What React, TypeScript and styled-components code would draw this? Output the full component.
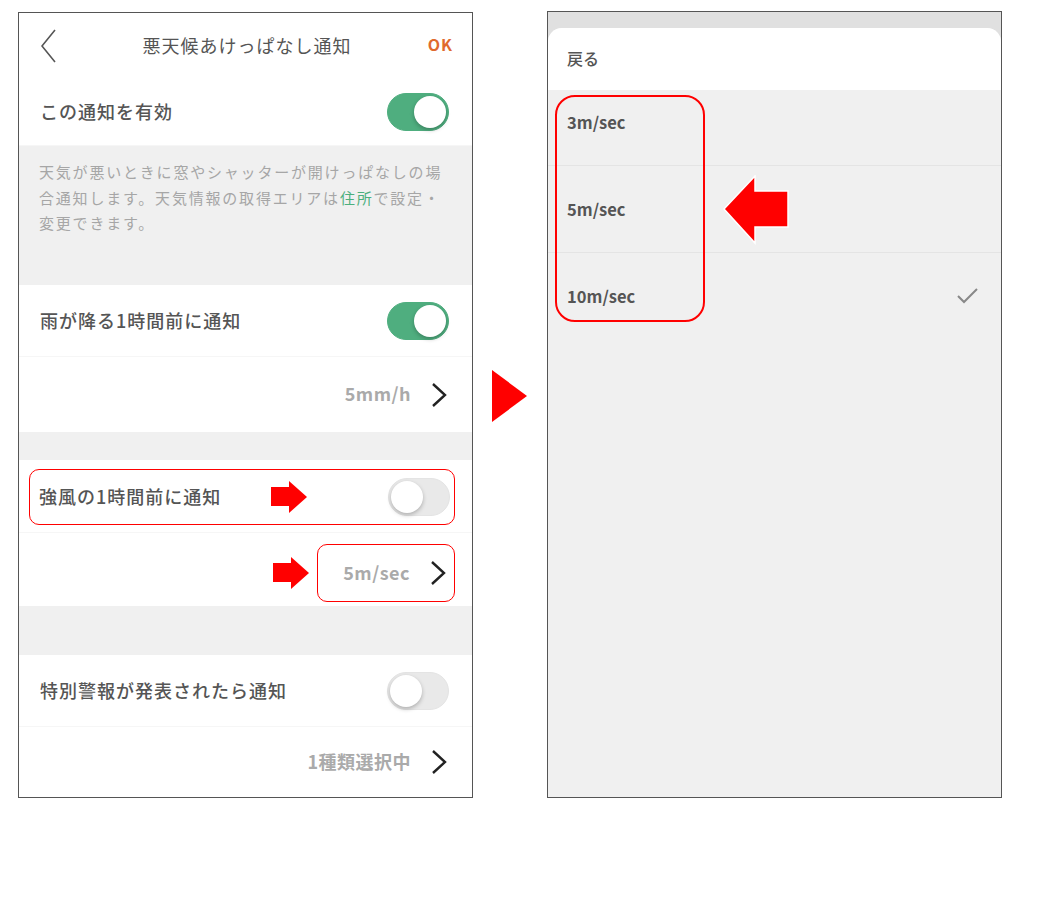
import { createGlobalStyle, styled } from "styled-components";

const GlobalStyle = createGlobalStyle`
  body {
    margin: 0;
    background: #ffffff;
    font-family: "Noto Sans CJK JP", "Noto Sans", sans-serif;
  }
`;

const Page = styled.div`
  display: flex;
  align-items: flex-start;
  padding: 12px 0 0 18px;
`;

const Panel = styled.div`
  width: 455px;
  height: 786px;
  box-sizing: border-box;
  border: 1px solid #555;
  background: #fff;
  display: flex;
  flex-direction: column;
  overflow: hidden;
`;

const Header = styled.div`
  height: 65px;
  flex-shrink: 0;
  display: grid;
  grid-template-columns: 1fr auto 1fr;
  align-items: center;
  padding: 0 19px 0 22px;
`;

const Title = styled.div`
  font-size: 18px;
  letter-spacing: 1px;
  color: #555;
  margin-top: -2px;
`;

const Ok = styled.div`
  justify-self: end;
  font-size: 16px;
  font-weight: 700;
  letter-spacing: 1px;
  color: #e06a2e;
  margin-top: -3px;
`;

const Row = styled.div<{ $h: number }>`
  height: ${(p) => p.$h}px;
  flex-shrink: 0;
  display: flex;
  align-items: center;
  justify-content: space-between;
  padding: 0 23px 0 21px;
  border-bottom: 1px solid #f6f6f6;
  box-sizing: border-box;
`;

const Label = styled.div`
  font-size: 18px;
  font-weight: 500;
  letter-spacing: 1px;
  color: #555;
  margin-top: -2px;
`;

const ValueRow = styled.div<{ $h?: number }>`
  ${(p) => (p.$h ? `height: ${p.$h}px; flex-shrink: 0;` : "flex: 1;")}
  display: flex;
  align-items: center;
  justify-content: flex-end;
  gap: 20px;
  padding-right: 25px;
`;

const Value = styled.div`
  font-size: 18px;
  font-weight: 700;
  letter-spacing: 0.5px;
  color: #aaa;
  margin-top: -3px;
`;

const Gap = styled.div<{ $h: number }>`
  height: ${(p) => p.$h}px;
  flex-shrink: 0;
  background: #f0f0f0;
`;

const Desc = styled.div`
  height: 139px;
  flex-shrink: 0;
  box-sizing: border-box;
  background: #f0f0f0;
  padding: 13px 20px;
  font-size: 15px;
  letter-spacing: 1.8px;
  line-height: 25.5px;
  color: #a6a6a6;
  white-space: nowrap;
`;

const Link = styled.span`
  color: #4caf7d;
`;

const Track = styled.div<{ $on: boolean }>`
  width: 62px;
  height: 38px;
  box-sizing: border-box;
  border-radius: 19px;
  padding: 2px;
  display: flex;
  justify-content: ${(p) => (p.$on ? "flex-end" : "flex-start")};
  background: ${(p) => (p.$on ? "#4fae7f" : "#e9e9e9")};
  border: 1px solid ${(p) => (p.$on ? "#4fae7f" : "#e4e4e4")};
`;

const Knob = styled.div`
  width: 32px;
  height: 32px;
  border-radius: 50%;
  background: #fff;
  box-shadow: 0 2px 4px rgba(0, 0, 0, 0.25);
`;

const FrameRow = styled.div`
  height: 73px;
  flex-shrink: 0;
  box-sizing: border-box;
  display: flex;
  padding: 9px 17px 7px 10px;
  border-bottom: 1px solid #f6f6f6;
`;

const Frame = styled.div`
  flex: 1;
  display: flex;
  align-items: center;
  border: 1.5px solid #f00;
  border-radius: 10px;
  padding: 0 4px 0 9px;
`;

const Push = styled.div`
  flex: 1;
`;

const FrameValueRow = styled.div`
  height: 73px;
  flex-shrink: 0;
  box-sizing: border-box;
  display: flex;
  align-items: center;
  justify-content: flex-end;
  gap: 8px;
  padding: 11px 17px 4px 0;
`;

const ValueFrame = styled.div`
  height: 100%;
  box-sizing: border-box;
  display: flex;
  align-items: center;
  gap: 20px;
  border: 1.5px solid #f00;
  border-radius: 10px;
  padding: 0 8px 0 25px;
`;

const ArrowWrap = styled.div<{ $ml?: number }>`
  display: flex;
  margin-left: ${(p) => p.$ml ?? 0}px;
`;

const Middle = styled.div`
  width: 74px;
  flex-shrink: 0;
  padding-top: 358px;
`;

const Triangle = styled.div`
  width: 0;
  height: 0;
  margin-left: 19px;
  border-top: 26px solid transparent;
  border-bottom: 26px solid transparent;
  border-left: 35px solid #f00;
`;

const SheetPanel = styled(Panel)`
  height: 787px;
  margin-top: -1px;
  background: #e0e0e0;
`;

const Strip = styled.div`
  height: 16px;
  flex-shrink: 0;
`;

const Sheet = styled.div`
  flex: 1;
  display: flex;
  flex-direction: column;
  background: #f0f0f0;
  border-radius: 14px 14px 0 0;
  overflow: hidden;
`;

const SheetHeader = styled.div`
  height: 62px;
  flex-shrink: 0;
  display: flex;
  align-items: center;
  padding: 0 19px;
  background: #fff;
  font-size: 16px;
  font-weight: 500;
  color: #555;
  span {
    margin-top: -2px;
  }
`;

const List = styled.div`
  position: relative;
`;

const Option = styled.div<{ $first?: boolean; $last?: boolean }>`
  height: ${(p) => (p.$first ? 76 : 87)}px;
  box-sizing: border-box;
  display: flex;
  align-items: flex-start;
  justify-content: space-between;
  padding: ${(p) => (p.$first ? 22 : 33)}px 22px 0 19px;
  border-bottom: ${(p) => (p.$last ? "none" : "1px solid #e4e4e4")};
  font-size: 16.5px;
  font-weight: 700;
  line-height: 20px;
  color: #555;
`;

const CheckBox = styled.div`
  display: flex;
  margin-top: 2px;
`;

const Highlight = styled.div`
  position: absolute;
  left: 7px;
  top: 5px;
  width: 150px;
  height: 227px;
  box-sizing: border-box;
  border: 2px solid #f00;
  border-radius: 20px;
`;

const BigArrow = styled.svg`
  position: absolute;
  left: 175px;
  top: 85px;
`;

const Toggle = ({ on }: { on: boolean }) => (
  <Track $on={on}>
    <Knob />
  </Track>
);

const Chevron = () => (
  <svg width="16" height="24" viewBox="0 0 16 24">
    <polyline points="2,1 14,12 2,23" fill="none" stroke="#222" strokeWidth="2.4" />
  </svg>
);

const BackIcon = () => (
  <svg width="16" height="34" viewBox="0 0 16 34">
    <polyline points="14,1 1,17 14,33" fill="none" stroke="#555" strokeWidth="1.6" />
  </svg>
);

const SmallArrow = () => (
  <svg width="36" height="32" viewBox="0 0 36 32">
    <rect x="0" y="6" width="19" height="19" fill="#f00" />
    <polygon points="18,0 36,16 18,32" fill="#f00" />
  </svg>
);

const Check = () => (
  <svg width="22" height="16" viewBox="0 0 22 16">
    <polyline points="1,8 7,14 20,1" fill="none" stroke="#888" strokeWidth="2" />
  </svg>
);

const options = ["3m/sec", "5m/sec", "10m/sec"];

export default function App() {
  return (
    <>
      <GlobalStyle />
      <Page>
        <Panel>
          <Header>
            <BackIcon />
            <Title>悪天候あけっぱなし通知</Title>
            <Ok>OK</Ok>
          </Header>
          <Row $h={68}>
            <Label>この通知を有効</Label>
            <Toggle on />
          </Row>
          <Desc>
            天気が悪いときに窓やシャッターが開けっぱなしの場
            <br />
            合通知します。天気情報の取得エリアは<Link>住所</Link>で設定・
            <br />
            変更できます。
          </Desc>
          <Row $h={72}>
            <Label>雨が降る1時間前に通知</Label>
            <Toggle on />
          </Row>
          <ValueRow $h={75}>
            <Value>5mm/h</Value>
            <Chevron />
          </ValueRow>
          <Gap $h={28} />
          <FrameRow>
            <Frame>
              <Label>強風の1時間前に通知</Label>
              <ArrowWrap $ml={50}>
                <SmallArrow />
              </ArrowWrap>
              <Push />
              <Toggle on={false} />
            </Frame>
          </FrameRow>
          <FrameValueRow>
            <ArrowWrap>
              <SmallArrow />
            </ArrowWrap>
            <ValueFrame>
              <Value>5m/sec</Value>
              <Chevron />
            </ValueFrame>
          </FrameValueRow>
          <Gap $h={49} />
          <Row $h={72}>
            <Label>特別警報が発表されたら通知</Label>
            <Toggle on={false} />
          </Row>
          <ValueRow>
            <Value>1種類選択中</Value>
            <Chevron />
          </ValueRow>
        </Panel>

        <Middle>
          <Triangle />
        </Middle>

        <SheetPanel>
          <Strip />
          <Sheet>
            <SheetHeader>
              <span>戻る</span>
            </SheetHeader>
            <List>
              {options.map((o, i) => (
                <Option key={o} $first={i === 0} $last={i === options.length - 1}>
                  <span>{o}</span>
                  {i === options.length - 1 && (
                    <CheckBox>
                      <Check />
                    </CheckBox>
                  )}
                </Option>
              ))}
              <Highlight />
              <BigArrow width="68" height="70" viewBox="0 0 68 70">
                <polygon
                  points="1,34 32,1 32,16 65,16 65,52 32,52 32,68"
                  fill="#f00"
                  stroke="#fff"
                  strokeWidth="1.5"
                />
              </BigArrow>
            </List>
          </Sheet>
        </SheetPanel>
      </Page>
    </>
  );
}
